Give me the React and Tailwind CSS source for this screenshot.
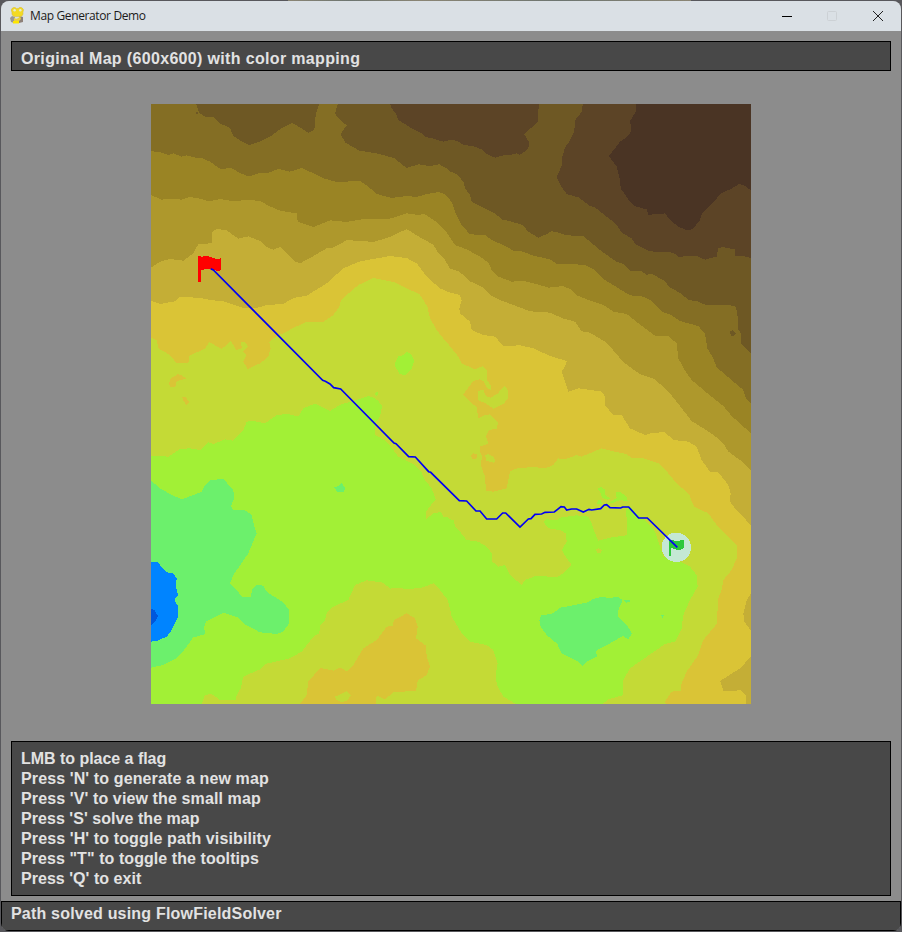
import React from "react";

// Terrain bands, painted from the highest elevation down to deep water.
// Map units are thirds of a pixel.
const bands = [
  ["#6e5824", "3,12 1803,12 1803,1812 3,1812"],
  ["#5c4426", "720,12 725,25 740,45 745,60 765,72 790,88 812,98 828,111 850,116 880,125 900,120 920,122 940,134 970,139 995,148 1010,162 1035,173 1055,167 1090,163 1100,160 1108,164 1125,155 1137,140 1136,125 1122,102 1150,78 1163,66 1163,45 1168,12"],
  ["#5c4426", "1298,12 1296,35 1277,58 1272,95 1258,125 1245,142 1237,170 1236,195 1220,232 1235,262 1250,282 1285,292 1320,318 1335,322 1380,358 1398,372 1415,398 1445,415 1455,432 1500,454 1570,458 1585,470 1640,468 1665,479 1700,470 1705,445 1718,441 1754,448 1756,467 1780,468 1803,474 1803,12"],
  ["#4a3424", "1458,12 1457,35 1441,62 1443,95 1430,112 1410,125 1377,168 1400,200 1410,240 1412,265 1440,305 1452,318 1490,328 1495,344 1520,343 1545,340 1560,360 1585,380 1610,390 1628,388 1650,360 1656,342 1690,308 1712,280 1745,266 1767,252 1785,257 1803,272 1803,12"],
  ["#846e24", "563,12 555,40 565,55 590,76 572,102 585,127 628,152 680,160 732,174 770,204 805,193 840,198 868,193 890,205 900,214 920,222 940,245 945,265 960,285 965,305 1010,328 1035,340 1055,358 1085,365 1118,375 1135,395 1165,413 1190,402 1205,394 1220,396 1250,406 1300,408 1320,425 1360,458 1400,485 1420,492 1440,512 1475,514 1490,524 1505,522 1540,540 1560,562 1595,582 1615,600 1640,603 1665,614 1700,615 1730,614 1758,620 1763,650 1763,685 1772,700 1772,730 1803,760 1803,1812 3,1812 3,12"],
  ["#6e5824", "138,12 147,38 165,50 190,52 210,70 240,84 250,108 272,122 297,135 330,125 365,107 395,84 427,69 455,85 475,99 493,90 497,45 503,25 508,12"],
  ["#6e5824", "138,36 144,36 144,42 138,42"],
  ["#6e5824", "1740,694 1748,690 1758,700 1750,710 1742,706"],
  ["#9a8424", "3,153 30,157 55,165 70,160 95,170 110,166 130,172 155,174 180,185 210,206 245,205 270,219 297,230 325,220 350,220 385,207 420,215 455,204 490,220 520,235 560,246 630,243 655,260 680,282 725,294 770,288 800,291 830,282 868,276 888,285 900,300 907,310 915,335 935,375 960,403 1005,405 1030,423 1060,435 1090,452 1115,454 1150,467 1200,478 1222,493 1265,492 1305,495 1330,508 1365,540 1440,586 1480,590 1500,600 1535,635 1560,643 1590,663 1645,678 1665,702 1672,745 1690,775 1700,802 1780,870 1787,893 1803,910 1803,1812 3,1812"],
  ["#ae982c", "3,285 35,299 60,296 95,299 118,291 150,296 178,304 210,297 245,303 300,300 332,303 355,317 390,332 440,340 443,365 490,381 540,361 590,366 640,357 720,356 770,340 800,344 825,343 860,366 885,390 900,412 915,435 950,448 990,470 1015,488 1025,510 1045,530 1085,545 1120,543 1160,552 1195,563 1240,558 1265,570 1280,586 1315,600 1360,615 1390,635 1430,642 1465,670 1515,707 1555,708 1580,730 1585,775 1605,812 1625,840 1670,878 1720,918 1745,948 1803,1000 1803,1812 3,1812"],
  ["#c4ae36", "3,503 30,485 60,477 100,482 130,460 145,432 185,430 187,395 200,387 228,390 265,416 295,409 335,425 348,440 370,449 390,441 435,485 450,490 480,474 530,445 545,445 590,421 625,422 670,426 720,411 770,387 810,412 850,434 865,460 885,480 900,505 925,514 945,528 960,544 995,560 1020,585 1050,600 1090,615 1140,634 1200,638 1240,656 1275,665 1295,694 1320,698 1370,728 1420,786 1470,823 1515,838 1560,880 1625,963 1690,1004 1720,1030 1735,1055 1770,1080 1803,1113 1803,1812 3,1812"],
  ["#dac436", "3,603 30,612 75,604 90,590 150,594 180,600 220,604 280,624 320,624 350,615 400,612 418,600 440,592 470,587 530,550 580,505 630,484 720,468 770,474 800,490 830,530 870,565 900,578 930,585 935,600 928,625 930,640 960,665 965,690 1000,705 1035,710 1060,738 1110,736 1150,745 1200,768 1250,783 1248,793 1235,815 1245,845 1255,875 1285,865 1355,875 1365,890 1365,915 1390,946 1415,945 1440,985 1485,1005 1510,998 1545,997 1570,1020 1615,1025 1640,1040 1655,1080 1680,1115 1705,1117 1735,1155 1742,1180 1740,1205 1755,1225 1803,1276 1803,1812 3,1812"],
  ["#c4ae36", "1803,1480 1790,1500 1780,1540 1783,1565 1803,1592"],
  ["#c4ae36", "1803,1670 1770,1705 1710,1743 1720,1772 1750,1773 1770,1770 1788,1785 1788,1812 1803,1812"],
  ["#c4da36", "3,713 20,720 25,745 60,765 80,790 115,790 118,768 165,745 178,726 215,747 235,730 243,723 250,735 258,750 275,745 274,727 285,725 293,740 285,750 278,755 290,765 280,785 293,807 330,790 355,770 362,745 358,725 380,708 400,700 430,684 470,665 520,665 550,645 568,620 573,600 590,585 625,555 670,534 735,547 770,565 808,582 820,600 832,620 840,655 860,690 880,715 903,742 925,770 935,790 975,808 998,798 1010,810 1010,840 1022,855 1022,870 1010,862 1000,843 990,838 970,843 940,883 965,910 980,920 985,955 1000,947 1020,943 1043,965 1042,985 1018,990 1008,1008 1015,1030 1005,1035 990,1038 990,1055 996,1070 992,1095 1005,1130 1008,1172 1030,1175 1070,1165 1080,1115 1105,1103 1160,1102 1185,1105 1210,1095 1225,1075 1245,1078 1280,1065 1295,1070 1355,1045 1395,1055 1430,1062 1445,1075 1480,1075 1525,1090 1555,1120 1580,1150 1620,1185 1623,1200 1633,1220 1675,1240 1700,1275 1760,1335 1760,1375 1745,1410 1720,1440 1715,1470 1703,1500 1702,1570 1660,1620 1645,1665 1610,1715 1595,1750 1592,1772 1565,1775 1545,1805 1548,1812 3,1812"],
  ["#c4da36", "985,872 1000,870 1008,888 1022,893 1045,880 1052,868 1065,858 1073,870 1074,895 1060,912 1030,926 1010,912 985,900"],
  ["#c4da36", "1005,1067 1015,1062 1030,1070 1037,1083 1030,1088 1010,1083"],
  ["#dac436", "962,1066 970,1060 981,1064 980,1075 968,1078"],
  ["#dac436", "62,835 85,822 98,828 108,836 80,843 76,860 62,863 57,850"],
  ["#dac436", "95,890 107,892 117,905 110,917 102,905"],
  ["#dac436", "450,1812 470,1785 475,1745 510,1704 550,1712 570,1702 590,1714 610,1695 640,1645 680,1620 710,1580 728,1578 732,1560 770,1540 795,1555 803,1580 798,1615 828,1637 830,1670 840,1700 830,1725 803,1742 798,1772 730,1777 705,1798 680,1786 678,1812"],
  ["#c4da36", "555,1790 575,1782 590,1773 603,1785 592,1802 575,1806 560,1800"],
  ["#a2f036", "3,1067 55,1070 90,1047 120,1045 150,1050 175,1027 190,1032 225,1018 250,1022 280,990 290,965 310,963 345,970 380,945 415,942 445,950 460,925 495,911 540,933 570,914 610,903 655,888 675,895 685,903 696,918 690,950 675,970 675,1005 690,1013 710,1025 745,1070 790,1093 815,1118 825,1140 845,1165 858,1200 828,1235 828,1257 850,1240 872,1236 880,1250 893,1252 888,1215 900,1195 915,1215 918,1280 950,1320 985,1325 1010,1340 1025,1360 1027,1385 1045,1400 1065,1395 1080,1425 1115,1455 1125,1440 1160,1427 1220,1432 1240,1420 1265,1395 1250,1375 1235,1350 1250,1325 1248,1300 1230,1290 1195,1285 1180,1265 1190,1258 1220,1260 1235,1252 1280,1246 1315,1250 1325,1270 1335,1300 1345,1322 1385,1312 1430,1306 1432,1270 1427,1230 1440,1220 1460,1240 1495,1270 1513,1290 1525,1325 1540,1370 1590,1385 1620,1400 1640,1425 1643,1460 1620,1500 1600,1545 1595,1585 1575,1625 1545,1632 1440,1705 1420,1740 1420,1785 1375,1798 1358,1812 1098,1812 1060,1790 1040,1755 1038,1720 1043,1690 1030,1650 1010,1635 960,1625 935,1600 905,1550 900,1525 893,1500 870,1470 850,1450 820,1462 770,1468 745,1463 720,1466 700,1448 650,1441 615,1455 595,1500 550,1520 530,1540 525,1560 510,1575 508,1600 490,1610 455,1655 420,1675 345,1692 330,1708 280,1730 272,1765 260,1785 258,1800 210,1800 185,1782 165,1785 155,1812 3,1812"],
  ["#c4da36", "828,1235 845,1212 858,1198 895,1190 925,1200 925,1290 915,1280 912,1262 900,1258 893,1252 880,1250 872,1236 850,1240 828,1257"],
  ["#a2f036", "745,769 758,766 770,755 785,764 793,783 785,805 768,825 750,823 733,795"],
  ["#a2f036", "675,879 682,874 685,884 678,889"],
  ["#a2f036", "1343,1165 1355,1161 1366,1170 1366,1184 1380,1196 1372,1199 1357,1193 1352,1180"],
  ["#a2f036", "1398,1176 1410,1176 1428,1188 1435,1205 1410,1200 1385,1210 1370,1211 1400,1195"],
  ["#a2f036", "1343,1200 1353,1200 1356,1212 1342,1212"],
  ["#c4da36", "1337,1350 1345,1344 1355,1350 1352,1360 1342,1358"],
  ["#6cf06c", "3,1142 30,1165 60,1182 95,1198 130,1185 155,1175 165,1155 180,1140 220,1137 250,1170 252,1195 243,1218 250,1230 285,1231 305,1245 312,1275 320,1300 295,1360 250,1425 240,1450 260,1470 275,1490 302,1490 308,1465 320,1455 340,1457 350,1475 400,1508 418,1530 417,1570 400,1595 380,1602 330,1597 280,1570 265,1553 220,1538 170,1563 162,1580 165,1603 130,1612 95,1660 80,1675 40,1695 3,1703"],
  ["#6cf06c", "553,1162 567,1157 575,1150 586,1165 582,1175 562,1176"],
  ["#6cf06c", "1168,1560 1175,1545 1205,1542 1232,1523 1310,1508 1330,1497 1355,1490 1375,1494 1405,1491 1418,1500 1405,1530 1405,1550 1430,1575 1446,1600 1435,1617 1418,1608 1380,1630 1340,1650 1337,1660 1343,1668 1310,1685 1298,1698 1285,1685 1235,1660 1222,1632 1190,1605 1172,1580"],
  ["#6cf06c", "1422,1500 1438,1499 1440,1506 1428,1508"],
  ["#6cf06c", "1533,1546 1541,1546 1538,1554"],
  ["#0084ff", "3,1386 22,1386 50,1417 70,1420 80,1435 78,1460 84,1485 73,1500 84,1518 84,1550 65,1590 50,1610 20,1623 3,1625"],
  ["#0057dc", "3,1527 12,1529 24,1548 16,1565 3,1575"],
];

const route =
  "182,506 190,510 518,841 526,844 540,852 551,863 572,867 732,1029 738,1031 776,1070 796,1071 836,1115 842,1117 928,1202 950,1203 978,1233 990,1233 1010,1257 1040,1257 1058,1239 1067,1239 1110,1281 1135,1257 1143,1256 1155,1243 1175,1242 1185,1237 1213,1236 1233,1220 1243,1221 1250,1230 1265,1227 1280,1227 1300,1236 1317,1228 1325,1230 1352,1226 1363,1215 1370,1214 1380,1223 1412,1224 1418,1221 1436,1221 1466,1254 1492,1254 1582,1342";

function TerrainMap() {
  return (
    <svg className="block h-[600px] w-[600px]" viewBox="3 12 1800 1800" shapeRendering="crispEdges">
      {bands.map(([fill, points], i) => (
        <polygon key={i} fill={fill} points={points} />
      ))}
      <path fill="#ff0000" d="M144 467h9v4l14-3 12 2 12 5 15 2 7-3v36l-9 3-14-3-10-4-16 2-11 3v34h-9z" />
      <circle cx="1579" cy="1342" r="44" fill="#c4e8d4" />
      <path fill="#2cc83c" d="M1557 1320h8l13 3 24-3v24l-12 6-15-2-11-5-1 24h-6z" />
      <polyline points={route} fill="none" stroke="#0000f4" strokeWidth="5" shapeRendering="geometricPrecision" />
    </svg>
  );
}

function SnakeIcon() {
  return (
    <svg className="h-[18px] w-4" viewBox="0 0 16 18">
      <path d="M3 9l-2 2 1 4 3 1 1-6z" fill="#9a9894" />
      <path d="M10 9l4 1v5l-4 1z" fill="#8d8078" />
      <path d="M3 5a2.6 2.6 0 014.4-3.4h1.8A2.6 2.6 0 0113.8 5q1 4-2.8 4.600H6Q2.400 9 3 5z" fill="#f3da22" stroke="#d6bd3a" strokeWidth=".6" />
      <path d="M5 11q4 2 6-2l1 3-3 3H5z" fill="#e9d23c" />
      <path d="M4 14h6v2.500H4z" fill="#fde600" />
      <circle cx="5.600" cy="3.300" r="1.200" fill="#e6e9d0" />
      <circle cx="11.300" cy="3.300" r="1.200" fill="#e6e9d0" />
    </svg>
  );
}

function TitleBar() {
  return (
    <header className="flex h-[30px] items-center bg-[#dae0e5] pl-2">
      <SnakeIcon />
      <span className="ml-[5px] font-['Open_Sans',sans-serif] text-[12px] leading-4 tracking-[-0.37px] text-[#1a1a1a]">
        Map Generator Demo
      </span>
      <div className="ml-auto flex pr-[17px]">
        <svg className="h-3 w-[102px]" viewBox="0 0 102 12" fill="none">
          <path d="M0 6.5h10" stroke="#000" />
          <rect x="45.5" y="1.5" width="9" height="9" rx="1" stroke="#ccd1d5" />
          <path d="M91 1l10 10M101 1L91 11" stroke="#222" />
        </svg>
      </div>
    </header>
  );
}

const help = [
  ["LMB to place a flag", "tracking-[-0.03px]"],
  ["Press 'N' to generate a new map", "tracking-[0.12px]"],
  ["Press 'V' to view the small map", "tracking-[0.12px]"],
  ["Press 'S' solve the map", "tracking-[0.05px]"],
  ["Press 'H' to toggle path visibility", "tracking-[0.12px]"],
  ['Press "T" to toggle the tooltips', "tracking-[0.07px]"],
  ["Press 'Q' to exit", "tracking-[0.04px]"],
];

export default function App() {
  return (
    <div className="h-[932px] w-[902px] overflow-hidden bg-[#58585c] bg-[linear-gradient(90deg,transparent_288px,#8a8574_288px,#6d7570_350px,#8a8574_420px,#6d7570_560px,#8a8574_691px,transparent_691px)] bg-[length:902px_1px] bg-no-repeat p-px font-['Liberation_Sans',Arial,sans-serif] text-[16px] font-bold leading-5 text-[#e2e2e2]">
      <div className="flex h-[930px] w-[900px] flex-col overflow-hidden rounded-lg bg-[#8c8c8c]">
        <div className="font-normal">
          <TitleBar />
        </div>
        <div className="mx-2.5 mt-2.5 h-[30px] border border-black bg-[#484848] pl-[9px] pt-[7px]">
          <p className="w-fit whitespace-nowrap tracking-[0.34px]">Original Map (600x600) with color mapping</p>
        </div>
        <div className="mt-[33px] flex justify-center">
          <TerrainMap />
        </div>
        <div className="mx-2.5 mt-[37px] h-[155px] border border-black bg-[#484848] pl-[9px] pt-[7px]">
          {help.map(([line, spacing]) => (
            <p key={line} className={`w-fit whitespace-nowrap ${spacing}`}>{line}</p>
          ))}
        </div>
        <div className="mt-[5px] h-[30px] border border-black bg-[#484848] pl-[9px] pt-[2px]">
          <p className="w-fit whitespace-nowrap tracking-[0.2px]">Path solved using FlowFieldSolver</p>
        </div>
      </div>
    </div>
  );
}
